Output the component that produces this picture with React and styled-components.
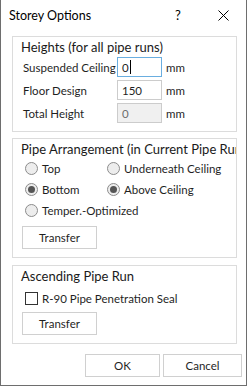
import React from 'react'
import styled, { createGlobalStyle } from 'styled-components'

const GlobalStyle = createGlobalStyle`
  html, body {
    margin: 0;
    padding: 0;
    background: #ffffff;
  }
  * {
    box-sizing: border-box;
  }
`

const Window = styled.div`
  width: 247px;
  height: 386px;
  display: flex;
  flex-direction: column;
  background: #ffffff;
  border: 1px solid #6e6e6e;
  border-top: none;
  font-family: Lato, "Open Sans", sans-serif;
  font-size: 11.5px;
  color: #1f1f1f;
`

const TitleBar = styled.div`
  height: 30px;
  display: flex;
  align-items: center;
  padding-left: 8px;
`

const Caption = styled.div`
  flex: 1;
  font-size: 12.5px;
  color: #000000;
`

const CaptionButton = styled.div`
  width: ${p => p.$w}px;
  height: 30px;
  display: flex;
  align-items: center;
  justify-content: center;
  font-size: 13px;
  color: #000000;
`

const Body = styled.div`
  flex: 1;
  display: flex;
  flex-direction: column;
  padding: 6px 9px 0 11px;
`

const Group = styled.div`
  display: flex;
  flex-direction: column;
  border: 1px solid #dcdcdc;
  padding: 2px 0 8px 8px;
  margin-top: ${p => p.$mt || 0}px;
  overflow: hidden;
  white-space: nowrap;
`

const GroupTitle = styled.div`
  font-size: 13px;
  line-height: 16px;
  height: 16px;
  color: #1a1a1a;
  margin-bottom: ${p => p.$mb}px;
`

const FieldRow = styled.div`
  display: flex;
  align-items: center;
  height: 20px;
  margin-left: 2px;
  & + & {
    margin-top: 3px;
  }
`

const Label = styled.div`
  width: 94px;
`

const Field = styled.div`
  width: 45px;
  height: 20px;
  display: flex;
  align-items: center;
  padding-left: 4px;
  border: 1px solid ${p => (p.$focused ? '#6aaee0' : '#cccccc')};
  background: ${p => (p.$disabled ? '#f0f0f0' : '#ffffff')};
  color: ${p => (p.$disabled ? '#6d6d6d' : '#1f1f1f')};
`

const Caret = styled.span`
  display: inline-block;
  width: 1px;
  height: 14px;
  background: #000000;
  margin-left: 1px;
`

const Unit = styled.div`
  margin-left: 4px;
`

const OptionGrid = styled.div`
  display: grid;
  grid-template-columns: 82px auto;
  grid-auto-rows: 21px;
  margin-left: 4px;
  margin-top: 1px;
`

const Option = styled.div`
  display: flex;
  align-items: center;
  gap: 4px;
`

const Radio = styled.span`
  width: 13px;
  height: 13px;
  flex: none;
  border-radius: 50%;
  border: 1px solid #8c8c8c;
  background: #ededed;
  display: flex;
  align-items: center;
  justify-content: center;
  &::after {
    content: '';
    width: 7px;
    height: 7px;
    border-radius: 50%;
    background: ${p => (p.$checked ? '#555555' : 'transparent')};
  }
`

const CheckRow = styled.div`
  display: flex;
  align-items: center;
  gap: 4px;
  height: 21px;
  margin-left: 4px;
  margin-bottom: 3px;
`

const Checkbox = styled.span`
  width: 13px;
  height: 13px;
  flex: none;
  border: 1px solid #333333;
  background: #ffffff;
`

const Button = styled.div`
  width: ${p => p.$w || 75}px;
  height: 23px;
  display: flex;
  align-items: center;
  justify-content: center;
  border: 1px solid #d0d0d0;
  background: #ffffff;
  color: #1f1f1f;
  margin-left: ${p => p.$ml || 0}px;
  margin-top: ${p => p.$mt || 0}px;
`

const Footer = styled.div`
  display: flex;
  justify-content: flex-end;
  gap: 3px;
  margin-top: 10px;
  margin-right: -5px;
`

const CloseIcon = () => (
  <svg width="11" height="11" viewBox="0 0 11 11">
    <path d="M0.5 0.5 L10.5 10.5 M10.5 0.5 L0.5 10.5" stroke="#000" strokeWidth="1" />
  </svg>
)

const App = () => (
  <Window>
    <GlobalStyle />
    <TitleBar>
      <Caption>Storey Options</Caption>
      <CaptionButton $w={44}>?</CaptionButton>
      <CaptionButton $w={46}><CloseIcon /></CaptionButton>
    </TitleBar>
    <Body>
      <Group>
        <GroupTitle $mb={2}>Heights (for all pipe runs)</GroupTitle>
        <FieldRow>
          <Label>Suspended Ceiling</Label>
          <Field $focused>0<Caret /></Field>
          <Unit>mm</Unit>
        </FieldRow>
        <FieldRow>
          <Label>Floor Design</Label>
          <Field>150</Field>
          <Unit>mm</Unit>
        </FieldRow>
        <FieldRow>
          <Label>Total Height</Label>
          <Field $disabled>0</Field>
          <Unit>mm</Unit>
        </FieldRow>
      </Group>
      <Group $mt={6}>
        <GroupTitle $mb={0}>Pipe Arrangement (in Current Pipe Run)</GroupTitle>
        <OptionGrid>
          <Option><Radio />Top</Option>
          <Option><Radio />Underneath Ceiling</Option>
          <Option><Radio $checked />Bottom</Option>
          <Option><Radio $checked />Above Ceiling</Option>
          <Option><Radio />Temper.-Optimized</Option>
        </OptionGrid>
        <Button $ml={1} $mt={5}>Transfer</Button>
      </Group>
      <Group $mt={7}>
        <GroupTitle $mb={4}>Ascending Pipe Run</GroupTitle>
        <CheckRow><Checkbox />R-90 Pipe Penetration Seal</CheckRow>
        <Button $ml={1}>Transfer</Button>
      </Group>
      <Footer>
        <Button>OK</Button>
        <Button $w={79}>Cancel</Button>
      </Footer>
    </Body>
  </Window>
)

export default App
